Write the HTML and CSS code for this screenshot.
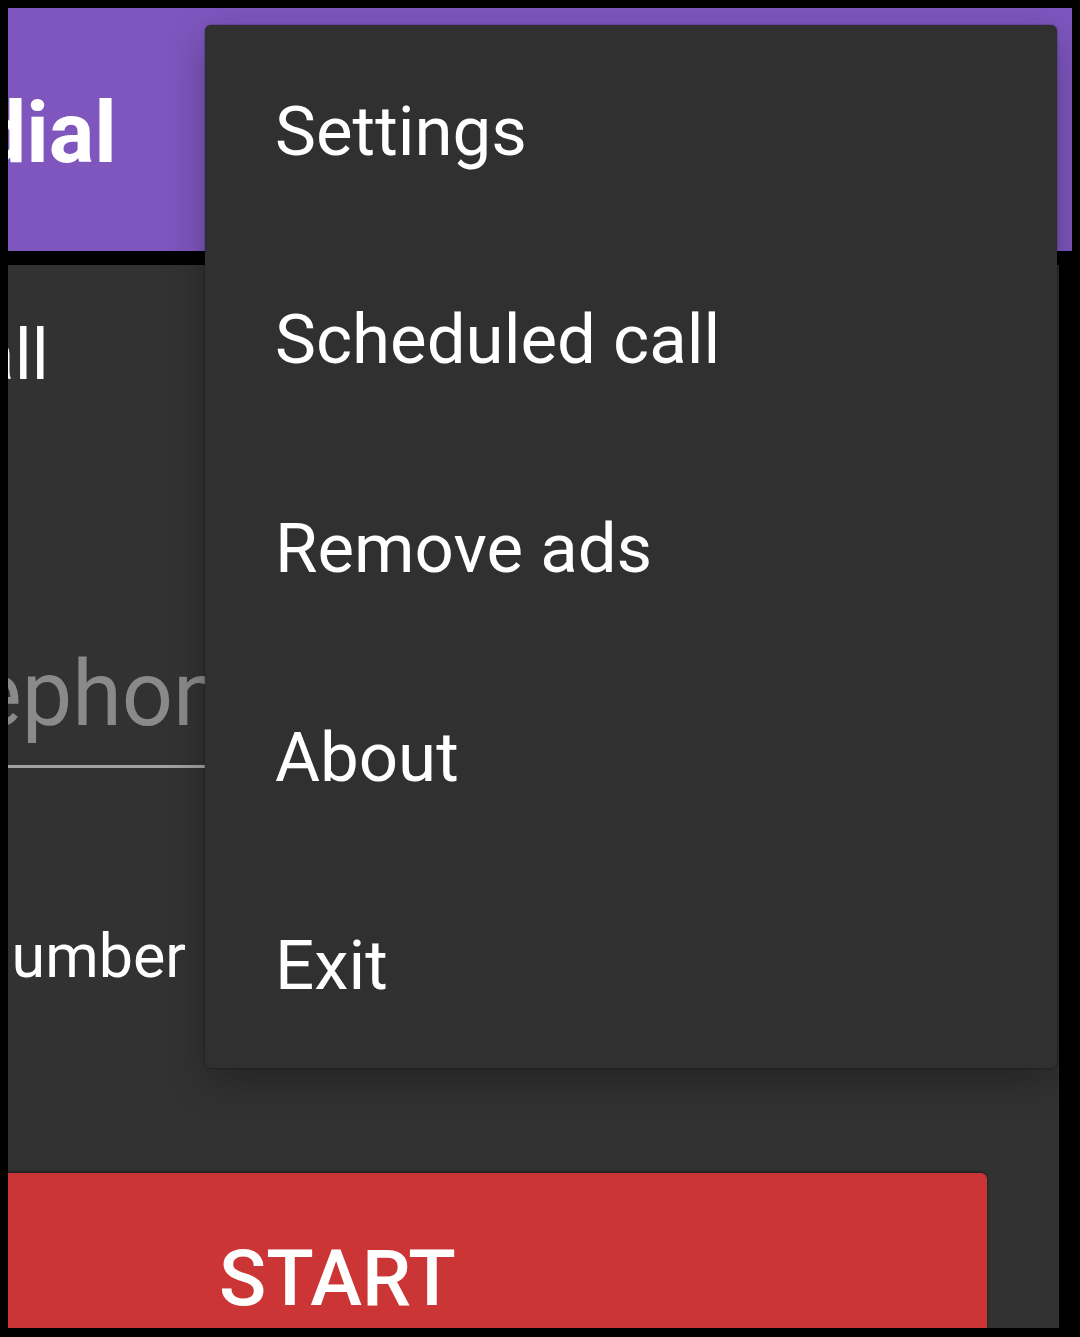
FILE: index.html
```html
<!DOCTYPE html>
<html>
<head>
<meta charset="utf-8">
<link rel="stylesheet" href="styles.css">
</head>
<body>
<div class="screen">
  <header class="appbar">
    <div class="title">Redial</div>
  </header>
  <main class="content">
    <div class="label label-call">Call</div>
    <div class="field">
      <div class="placeholder">Telephone number</div>
      <div class="underline"></div>
    </div>
    <div class="label label-count">Number (times)</div>
    <div class="btn-row">
      <button class="start">START</button>
    </div>
  </main>
  <nav class="menu">
    <div class="item">Settings</div>
    <div class="item">Scheduled call</div>
    <div class="item">Remove ads</div>
    <div class="item">About</div>
    <div class="item">Exit</div>
  </nav>
</div>
</body>
</html>
```
FILE: styles.css
```css
html, body {
  margin: 0;
  padding: 0;
  background: #000;
}
body {
  width: 1080px;
  height: 1337px;
  overflow: hidden;
  font-family: Roboto, "Noto Sans", sans-serif;
}
.screen {
  position: relative;
  margin: 8px 0 0 8px;
  width: 1064px;
  height: 1320px;
  overflow: hidden;
  background: #000;
}
.appbar {
  height: 243px;
  background: #7e56be;
  display: flex;
  align-items: center;
  overflow: hidden;
}
.title {
  margin-left: -130px;
  margin-top: 8px;
  color: #fff;
  font-weight: 700;
  font-size: 85px;
  line-height: 1;
  white-space: nowrap;
}
.content {
  margin-top: 14px;
  width: 1051px;
  height: 1063px;
  background: #323232;
  display: flex;
  flex-direction: column;
  overflow: hidden;
}
.label {
  color: #fff;
  font-size: 70px;
  line-height: 1;
  white-space: nowrap;
}
.label-call {
  margin-top: 55px;
  margin-left: -77px;
}
.field {
  margin-top: 260px;
  margin-left: -153px;
  width: 1100px;
}
.placeholder {
  color: #8a8a8a;
  font-size: 90px;
  line-height: 1;
  white-space: nowrap;
}
.underline {
  margin-top: 25px;
  height: 3px;
  background: #a2a2a2;
}
.label-count {
  margin-top: 158px;
  margin-left: -40px;
  font-size: 61px;
}
.btn-row {
  margin-top: auto;
  height: 155px;
  display: flex;
}
.start {
  margin-left: -60px;
  width: 1039px;
  height: 155px;
  border: none;
  border-radius: 6px 6px 0 0;
  background: #cc3535;
  box-shadow: 0 -1px 3px rgba(0,0,0,0.5);
  color: #fff;
  font-family: Roboto, sans-serif;
  font-weight: 500;
  font-size: 78px;
  text-align: left;
  padding: 57px 0 0 271px;
  line-height: 1;
  box-sizing: border-box;
}
.menu {
  position: absolute;
  left: 197px;
  top: 17px;
  width: 852px;
  height: 1043px;
  background: #303030;
  border-radius: 6px;
  box-shadow: 0 0 2px rgba(0,0,0,0.55), 0 14px 40px rgba(0,0,0,0.28);
  display: flex;
  flex-direction: column;
}
.item {
  flex: 1;
  display: flex;
  align-items: center;
  padding-left: 70px;
  padding-top: 4px;
  color: #fff;
  font-size: 69px;
  white-space: nowrap;
}
```
